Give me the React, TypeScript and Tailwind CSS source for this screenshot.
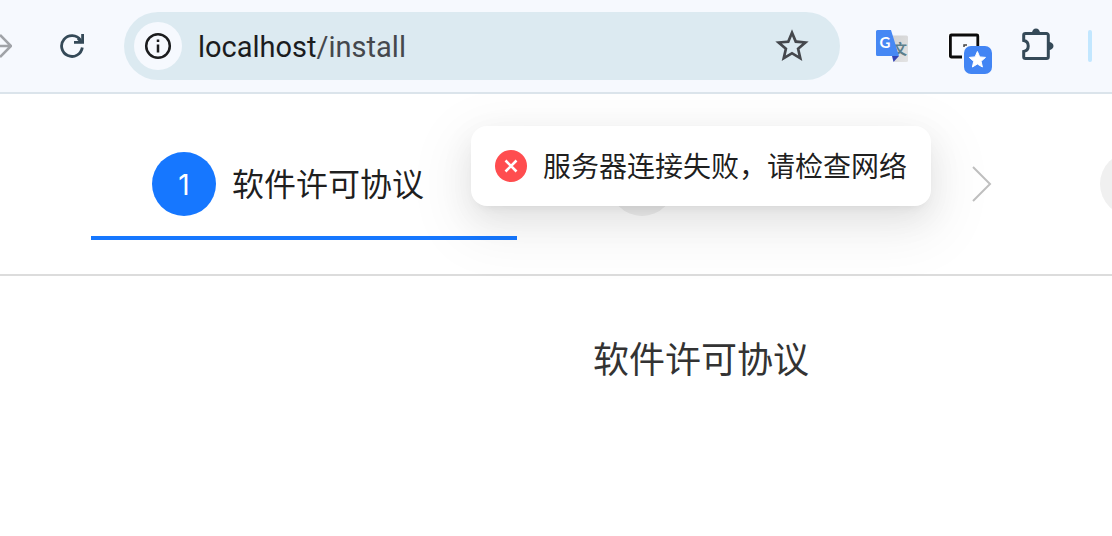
import { MdStarBorder } from "react-icons/md";

interface StepType {
  id: number;
  title: string;
  active: boolean;
}

const steps: StepType[] = [
  { id: 1, title: "软件许可协议", active: true },
  { id: 2, title: "", active: false },
  { id: 3, title: "", active: false },
];

function ForwardIcon() {
  return (
    <svg width="24" height="24" viewBox="0 0 24 24" fill="none" stroke="#a0a3a8" strokeWidth="2.6">
      <path d="M0 12h22M12 1l11 11-11 11" />
    </svg>
  );
}

function ReloadIcon() {
  return (
    <svg width="24" height="24" viewBox="0 0 24 24" fill="none" stroke="#354a58" strokeWidth="2.8">
      <path d="M22.3 13.5A10.4 10.4 0 1 1 20.6 6.2" />
      <path d="M22.6 0v8.4H14" />
      <path d="M18 4.5l4 4" />
    </svg>
  );
}

function InfoIcon() {
  return (
    <svg width="28" height="28" viewBox="0 0 28 28" fill="none" stroke="#1b1c1e" strokeWidth="2.5">
      <circle cx="14" cy="14" r="11.8" />
      <path d="M14 12.5v8M14 7.5v2.5" />
    </svg>
  );
}

function TranslateIcon() {
  return (
    <svg width="32" height="32" viewBox="0 0 32 32">
      <defs>
        <linearGradient id="translatePage" x1="0" y1="0" x2="1" y2="1">
          <stop offset="0" stopColor="#cfd0d1" />
          <stop offset="1" stopColor="#e4e4e4" />
        </linearGradient>
      </defs>
      <path d="M14 5.5h16.5A1.5 1.5 0 0 1 32 7v23.500a1.500 1.500 0 0 1-1.500 1.500H18z" fill="url(#translatePage)" />
      <text x="17" y="24" fontSize="14" fontWeight="700" fill="#5c7f8c" fontFamily="'Noto Sans CJK SC', sans-serif">文</text>
      <path d="M16 26h7l-5.500 6z" fill="#3343b5" />
      <path d="M1.500 0H15l8 26H1.500A1.500 1.500 0 0 1 0 24.500V1.500A1.500 1.500 0 0 1 1.500 0z" fill="#4688f4" />
      <text x="3.500" y="18" fontSize="15" fontWeight="700" fill="#fff" fontFamily="Lato, sans-serif">G</text>
    </svg>
  );
}

function WindowIcon() {
  return (
    <svg width="44" height="44" viewBox="0 0 44 44">
      <rect x="2.4" y="5" width="27.4" height="22" rx="1" fill="#fff" stroke="#fff" strokeWidth="5" />
      <rect x="2.4" y="5" width="27.4" height="22" rx="1" fill="#f9fbff" stroke="#0c0c0c" strokeWidth="2.8" />
      <path d="M16 17v-2h3" fill="none" stroke="#444" strokeWidth="1.5" />
      <rect x="14" y="16" width="30" height="28" rx="8" fill="#f6f9fe" />
      <rect x="16" y="16" width="28" height="28" rx="7" fill="#4285f4" />
      <path
        d="M29.4 21.500l2.300 5.400 5.800.5-4.400 3.900 1.300 5.700-5-3-5 3 1.300-5.700-4.400-3.900 5.800-.5z"
        fill="#fff"
        stroke="#fff"
        strokeWidth="1"
        strokeLinejoin="round"
      />
    </svg>
  );
}

function PuzzleIcon() {
  return (
    <svg width="36" height="36" viewBox="0 0 36 36" fill="none" stroke="#354a58" strokeWidth="3">
      <path d="M5.500 5.500h21a1.800 1.800 0 0 1 1.800 1.800v21.400a1.800 1.800 0 0 1-1.800 1.800h-21a1.800 1.800 0 0 1-1.800-1.800v-5.200a5.600 5.600 0 0 0 0-11V7.300a1.800 1.800 0 0 1 1.800-1.800z" />
      <path d="M12 5a4 4.500 0 0 1 8 0zM29 14a4.500 4 0 0 1 0 8z" fill="#354a58" stroke="none" />
    </svg>
  );
}

function ErrorIcon() {
  return (
    <svg width="32" height="32" viewBox="0 0 32 32" className="shrink-0">
      <circle cx="16" cy="16" r="16" fill="#ff4d4f" />
      <path d="M10.500 10.500l11 11M21.500 10.500l-11 11" stroke="#fff" strokeWidth="2.6" />
    </svg>
  );
}

function Chevron() {
  return (
    <svg width="20" height="36" viewBox="0 0 20 36" fill="none" stroke="#bfbfbf" strokeWidth="2" className="-mr-[10px] shrink-0">
      <path d="M1 1l17 17L1 35" />
    </svg>
  );
}

function Toolbar() {
  return (
    <header className="relative z-20 flex items-center border-b-2 border-[#dbe4eb] bg-[#f6f9fe] py-3 pr-5">
      <button type="button" aria-label="Forward" className="-ml-3 shrink-0">
        <ForwardIcon />
      </button>
      <button type="button" aria-label="Reload" className="ml-12 shrink-0">
        <ReloadIcon />
      </button>
      <div className="ml-10 flex h-[68px] min-w-0 flex-1 items-center rounded-full bg-[#dceaf1] pr-7 pl-[10px]">
        <button
          type="button"
          aria-label="Site information"
          className="flex size-12 shrink-0 items-center justify-center rounded-full bg-[#f6f9fe]"
        >
          <InfoIcon />
        </button>
        <p className="ml-4 min-w-0 flex-1 truncate pt-[2px] font-[Roboto,sans-serif] text-[29px] leading-8 text-[#1b1c1e]">
          localhost<span className="text-[#45484d]">/install</span>
        </p>
        <button type="button" aria-label="Bookmark" className="shrink-0">
          <MdStarBorder size={40} color="#45484d" />
        </button>
      </div>
      <button type="button" aria-label="Translate" className="ml-9 shrink-0">
        <TranslateIcon />
      </button>
      <button type="button" aria-label="Window" className="ml-10 shrink-0 pt-3">
        <WindowIcon />
      </button>
      <button type="button" aria-label="Extensions" className="ml-7 shrink-0">
        <PuzzleIcon />
      </button>
      <div className="ml-8 h-8 w-1 shrink-0 rounded-full bg-[#c2e7ff]" />
    </header>
  );
}

function Step({ step }: { step: StepType }) {
  return (
    <li className={step.active ? "w-[458px] shrink-0" : "w-[490px] shrink-0"}>
      <div className="flex items-center pl-[118px]">
        <span
          className={
            step.active
              ? "flex size-16 shrink-0 items-center justify-center rounded-full bg-[#1677ff] pt-[2px] font-[Inter,sans-serif] text-[28px] leading-8 text-white"
              : "size-16 shrink-0 rounded-full bg-[#f0f0f0]"
          }
        >
          {step.active && step.id}
        </span>
        <span className="ml-4 flex-1 pt-[2px] text-[32px] leading-10 whitespace-nowrap text-black/88">{step.title}</span>
        <Chevron />
      </div>
      {step.active && <div className="mt-5 ml-[57px] h-1 w-[426px] bg-[#1677ff]" />}
    </li>
  );
}

function Message({ text }: { text: string }) {
  return (
    <div className="absolute inset-x-0 top-8 z-10 flex justify-center pl-[290px]">
      <div
        role="alert"
        className="flex items-center gap-4 rounded-2xl bg-white px-6 py-5 shadow-[0_12px_32px_0_rgba(0,0,0,0.08),0_6px_12px_-8px_rgba(0,0,0,0.12),0_18px_56px_16px_rgba(0,0,0,0.05)]"
      >
        <ErrorIcon />
        <span className="pt-1 text-[28px] leading-9 whitespace-nowrap text-black/88">{text}</span>
      </div>
    </div>
  );
}

function App() {
  return (
    <div className="min-h-screen overflow-hidden bg-white font-['Liberation_Sans','Noto_Sans_CJK_SC',sans-serif]">
      <Toolbar />
      <main className="relative">
        <Message text="服务器连接失败，请检查网络" />
        <nav className="overflow-hidden border-b-2 border-[#dcdcdc] pt-[58px] pb-[34px] pl-[34px]">
          <ol className="flex">
            {steps.map((step) => (
              <Step key={step.id} step={step} />
            ))}
          </ol>
        </nav>
        <h1 className="pt-[61px] pl-[290px] text-center text-[36px] leading-12 text-[#333333]">软件许可协议</h1>
      </main>
    </div>
  );
}

export default App;
